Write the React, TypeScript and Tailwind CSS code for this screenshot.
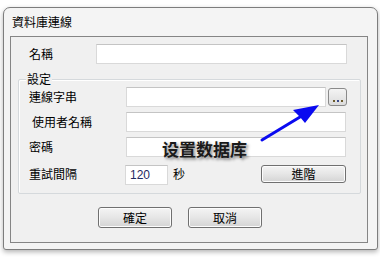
import React from 'react';

const cjk = "font-['Noto_Sans_CJK_TC','Noto_Sans_CJK_SC',sans-serif]";

const inputCls = 'h-[20px] bg-white border border-[#d9d9d9] border-t-[#c4c4c4]';
const btnCls =
    'flex items-center justify-center rounded-[3px] border border-[#707070] bg-gradient-to-b from-[#f4f4f4] via-[#e6e6e6] to-[#d4d4d4] text-[12px] leading-none text-black shadow-[inset_0_0_0_1px_#fcfcfc]';

const Row: React.FC<{ label: string; indent?: boolean; children: React.ReactNode; className?: string }> = ({ label, indent, children, className }) => (
    <div className={`flex items-center ${className ?? ''}`}>
        <div className={`w-[107px] shrink-0 text-[12px] leading-none text-black ${indent ? 'pl-[13px]' : 'pl-[10px]'}`}>{label}</div>
        {children}
    </div>
);

export default function App() {
    return (
        <div className={`relative w-[380px] h-[257px] bg-white pt-[7px] pl-[3px] ${cjk}`}>
            {/* dialog window */}
            <div className="w-[375px] h-[243px] border border-[#7d7d7d] rounded-t-[7px] rounded-b-[3px] bg-[#f4f4f4] shadow-[0_2px_5px_rgba(0,0,0,0.3)]">
                <div className="h-[28px] flex items-center pl-[8px] text-[12px] leading-none text-black">資料庫連線</div>

                <div className="ml-[6px] w-[358px] h-[207px] border border-[#858585] bg-[#f0f0f0] pt-[7px]">
                    {/* name */}
                    <div className="flex items-center">
                        <div className="w-[85px] pl-[18px] text-[12px] leading-none">名稱</div>
                        <div className={`w-[251px] ${inputCls}`} />
                    </div>

                    {/* settings group */}
                    <div className="relative ml-[7px] mt-[15px] w-[343px] h-[115px] border border-[#d5d9dc] shadow-[inset_1px_1px_0_#ffffff] rounded-[2px] pt-[7px]">
                        <span className="absolute left-[7px] top-[-7px] bg-[#f0f0f0] px-[1px] text-[12px] leading-none">設定</span>

                        <Row label="連線字串">
                            <div className={`w-[200px] ${inputCls}`} />
                            <div className="ml-[2px] w-[19px] h-[18px] rounded-[3px] border border-[#8a8a8a] bg-gradient-to-b from-[#f4f4f4] to-[#dcdcdc] flex items-end justify-center pb-[3px] gap-[2px]">
                                <span className="w-[2px] h-[2px] bg-[#6b5a2a]" />
                                <span className="w-[2px] h-[2px] bg-[#3a4a8a]" />
                                <span className="w-[2px] h-[2px] bg-[#6b5a2a]" />
                            </div>
                        </Row>

                        <Row label="使用者名稱" indent className="mt-[5px]">
                            <div className={`w-[220px] ${inputCls}`} />
                        </Row>

                        <Row label="密碼" className="mt-[5px]">
                            <div className={`w-[220px] ${inputCls}`} />
                        </Row>

                        <Row label="重試間隔" className="mt-[6px]">
                            <div className={`-ml-[1px] mt-[2px] w-[43px] ${inputCls} flex items-center pl-[4px] text-[12px] leading-none text-[#1f2a63] font-['Liberation_Sans',sans-serif]`}>120</div>
                            <span className="ml-[5px] text-[12px] leading-none">秒</span>
                            <div className={`ml-[76px] w-[85px] h-[18px] ${btnCls}`}>進階</div>
                        </Row>
                    </div>

                    {/* buttons */}
                    <div className="flex mt-[13px] ml-[87px] gap-[16px]">
                        <div className={`w-[74px] h-[21px] ${btnCls}`}>確定</div>
                        <div className={`w-[74px] h-[21px] ${btnCls}`}>取消</div>
                    </div>
                </div>
            </div>

            {/* annotation */}
            <div className="absolute left-[162px] top-[140px] text-[17px] leading-none font-bold text-[#1a1a1a] font-['Noto_Sans_CJK_SC',sans-serif] [text-shadow:2px_2px_3px_rgba(0,0,0,0.45)]">
                设置数据库
            </div>
            <svg className="absolute left-0 top-0" width="380" height="257" viewBox="0 0 380 257">
                <line x1="262" y1="140" x2="300" y2="117" stroke="#0a0af0" strokeWidth="3" strokeLinecap="round" />
                <polygon points="319,105 305,123 300,117 293,110" fill="#0a0af0" />
            </svg>
        </div>
    );
}
